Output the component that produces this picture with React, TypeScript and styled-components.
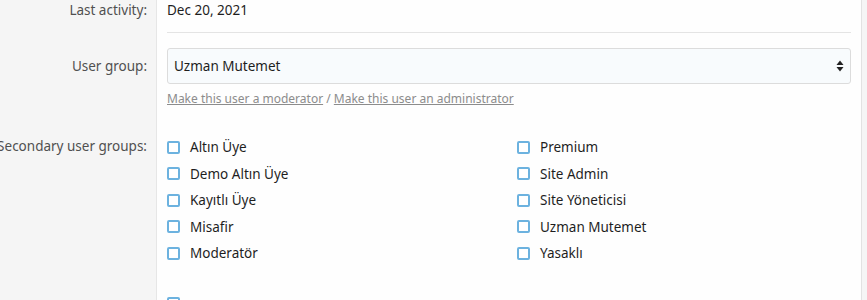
import styled, { createGlobalStyle } from 'styled-components';

const GlobalStyle = createGlobalStyle`
  html, body {
    margin: 0;
    padding: 0;
    background: #f5f5f5;
    font-family: "Noto Sans", "Open Sans", sans-serif;
    font-size: 13.5px;
    color: #1e1e1e;
  }
`;

// Left groups and right groups of the secondary list
const leftGroups = ['Altın Üye', 'Demo Altın Üye', 'Kayıtlı Üye', 'Misafir', 'Moderatör'];
const rightGroups = ['Premium', 'Site Admin', 'Site Yöneticisi', 'Uzman Mutemet', 'Yasaklı'];

const Form = styled.div`
  width: 862px;
  height: 300px;
  overflow: hidden;
  background: #fefefe;
  border-right: 1px solid #e2e2e2;
  box-sizing: border-box;
`;

const Row = styled.div`
  display: grid;
  grid-template-columns: 157px 1fr;
`;

const Label = styled.div<{ $top: number }>`
  background: #f5f5f5;
  border-right: 1px solid #e6e6e6;
  text-align: right;
  padding: ${(p) => p.$top}px 9px 0 0;
  color: #505050;
  line-height: 20px;
  white-space: nowrap;
  direction: rtl;
  overflow: hidden;
`;

const LabelText = styled.span`
  direction: ltr;
  unicode-bidi: isolate;
`;

const Value = styled.div<{ $top: number; $bottom: number }>`
  padding: ${(p) => p.$top}px 10px ${(p) => p.$bottom}px 10px;
`;

const Divider = styled.div`
  height: 1px;
  background: #e4e4e4;
  margin-top: 12px;
`;

const Text = styled.div`
  line-height: 20px;
`;

const Select = styled.div`
  display: flex;
  align-items: center;
  justify-content: space-between;
  height: 34px;
  padding: 0 6px;
  border: 1px solid #dcdcdc;
  border-radius: 3px;
  background: #f8fbfd;
  line-height: 20px;
`;

const Links = styled.div`
  margin-top: 6px;
  font-size: 12px;
  line-height: 18px;
  color: #8c8c8c;
`;

const Link = styled.a`
  color: #8c8c8c;
  text-decoration: underline;
`;

const Columns = styled.div`
  display: grid;
  grid-template-columns: 350px 1fr;
`;

const List = styled.ul`
  list-style: none;
  margin: 0;
  padding: 0;
`;

const Item = styled.li`
  display: flex;
  align-items: center;
  gap: 10px;
  height: 26.5px;
`;

const Box = styled.span`
  width: 13px;
  height: 13px;
  box-sizing: border-box;
  border: 2px solid #6cb2df;
  border-radius: 2px;
  background: #fff;
  flex: none;
`;

function Arrows() {
  return (
    <svg width="8" height="12" viewBox="0 0 8 12">
      <path d="M4 0.5 L7.5 5 L0.5 5 Z" fill="#222" />
      <path d="M4 11.5 L7.5 7 L0.5 7 Z" fill="#222" />
    </svg>
  );
}

function GroupList({ items }: { items: string[] }) {
  return (
    <List>
      {items.map((name) => (
        <Item key={name}>
          <Box />
          {name}
        </Item>
      ))}
    </List>
  );
}

export default function App() {
  return (
    <>
      <GlobalStyle />
      <Form>
        <Row>
          <Label $top={0}>
            <LabelText>Last activity:</LabelText>
          </Label>
          <Value $top={0} $bottom={0}>
            <Text>Dec 20, 2021</Text>
          </Value>
        </Row>
        <Row>
          <Label $top={0} />
          <Value $top={0} $bottom={0}>
            <Divider />
          </Value>
        </Row>
        <Row>
          <Label $top={23}>
            <LabelText>User group:</LabelText>
          </Label>
          <Value $top={15} $bottom={0}>
            <Select>
              Uzman Mutemet
              <Arrows />
            </Select>
            <Links>
              <Link>Make this user a moderator</Link> / <Link>Make this user an administrator</Link>
            </Links>
          </Value>
        </Row>
        <Row>
          <Label $top={28}>
            <LabelText>Secondary user groups:</LabelText>
          </Label>
          <Value $top={26} $bottom={24}>
            <Columns>
              <GroupList items={leftGroups} />
              <GroupList items={rightGroups} />
            </Columns>
          </Value>
        </Row>
        <Row>
          <Label $top={0} />
          <Value $top={0} $bottom={0}>
            <Item>
              <Box />
            </Item>
          </Value>
        </Row>
      </Form>
    </>
  );
}
